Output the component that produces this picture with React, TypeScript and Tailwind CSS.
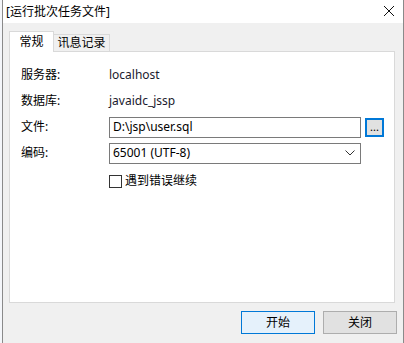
import React, { useState } from 'react';

const font = { fontFamily: '"Noto Sans", "Noto Sans CJK SC", sans-serif' };

const Row = ({ label, children, h }: { label: string; children: React.ReactNode; h: string }) => (
  <div className={`flex items-center ${h}`}>
    <div className="w-[88px] shrink-0 text-[12px] leading-none text-black">{label}</div>
    <div className="flex-1 flex items-center">{children}</div>
  </div>
);

const App = () => {
  const [tab, setTab] = useState('general');
  const [cont, setCont] = useState(false);

  return (
    <div className="w-[404px] h-[343px] flex bg-white overflow-hidden" style={font}>
      {/* strip of the window behind */}
      <div className="w-[2px] bg-[#f4f6fa]" />
      <div className="flex-1 flex flex-col border-l border-[#8a8a8a] border-r border-[#3c3c3c]">
        {/* title bar */}
        <div className="h-[23px] bg-white flex items-center justify-between pl-[3px] pr-[8px]">
          <span className="text-[12px] leading-none text-black">[运行批次任务文件]</span>
          <svg width="12" height="12" viewBox="0 0 12 12" className="mt-[-2px]">
            <path d="M1 1 L11 11 M11 1 L1 11" stroke="#111" strokeWidth="1" />
          </svg>
        </div>

        {/* body */}
        <div className="flex-1 bg-[#f0f0f0] pl-[6px] pt-[8px] flex flex-col">
          {/* tabs */}
          <div className="flex items-end h-[20px] relative z-10">
            <button
              onClick={() => setTab('general')}
              className={`h-[21px] w-[45px] border border-[#d9d9d9] border-b-0 text-[12px] leading-none flex items-center justify-center mb-[-1px] ${
                tab === 'general' ? 'bg-white' : 'bg-[#f0f0f0] h-[18px]'
              }`}
            >
              常规
            </button>
            <button
              onClick={() => setTab('log')}
              className={`w-[56px] border border-[#d9d9d9] border-b-0 border-l-0 text-[12px] leading-none flex items-center justify-center ${
                tab === 'log' ? 'bg-white h-[21px] mb-[-1px]' : 'bg-[#f0f0f0] h-[17px]'
              }`}
            >
              讯息记录
            </button>
          </div>

          {/* panel */}
          <div className="w-[386px] h-[252px] bg-white border border-[#d9d9d9] pl-[11px] pt-[10px]">
            {tab === 'general' && (
              <div className="flex flex-col">
                <Row label="服务器:" h="h-[26px]">
                  <span className="text-[12px] leading-none text-[#1a1a2e]">localhost</span>
                </Row>
                <Row label="数据库:" h="h-[26px]">
                  <span className="text-[12px] leading-none text-[#1a1a2e]">javaidc_jssp</span>
                </Row>
                <Row label="文件:" h="h-[26px]">
                  <div className="w-[252px] h-[21px] border border-[#7a7a7a] flex items-center pl-[3px] text-[12px] leading-none text-black">
                    D:\jsp\user.sql
                  </div>
                  <button className="ml-[4px] w-[19px] h-[19px] border-2 border-[#0078d7] bg-[#e1e1e1] flex items-end justify-center pb-[3px] text-[11px] leading-none text-black">
                    ...
                  </button>
                </Row>
                <Row label="编码:" h="h-[26px]">
                  <div className="w-[252px] h-[21px] border border-[#7a7a7a] flex items-center justify-between pl-[3px] pr-[5px] text-[12px] leading-none text-black">
                    <span>65001 (UTF-8)</span>
                    <svg width="10" height="6" viewBox="0 0 10 6">
                      <path d="M0.5 0.5 L5 5 L9.5 0.5" stroke="#333" strokeWidth="1" fill="none" />
                    </svg>
                  </div>
                </Row>
                <Row label="" h="h-[30px]">
                  <label className="flex items-center cursor-pointer">
                    <span
                      onClick={() => setCont(!cont)}
                      className="w-[13px] h-[13px] border border-[#333] bg-white flex items-center justify-center"
                    >
                      {cont && (
                        <svg width="9" height="9" viewBox="0 0 9 9">
                          <path d="M1 4.5 L3.5 7 L8 1.5" stroke="#000" strokeWidth="1.3" fill="none" />
                        </svg>
                      )}
                    </span>
                    <span className="ml-[3px] text-[12px] leading-none text-black">遇到错误继续</span>
                  </label>
                </Row>
              </div>
            )}
          </div>

          {/* buttons */}
          <div className="flex justify-end gap-[8px] pr-[6px] pt-[8px]">
            <button className="w-[74px] h-[23px] border border-[#0078d7] bg-[#e5f1fb] text-[12px] leading-none text-black">
              开始
            </button>
            <button className="w-[74px] h-[23px] border border-[#adadad] bg-[#e1e1e1] text-[12px] leading-none text-black">
              关闭
            </button>
          </div>
        </div>
      </div>
    </div>
  );
};

export default App;
